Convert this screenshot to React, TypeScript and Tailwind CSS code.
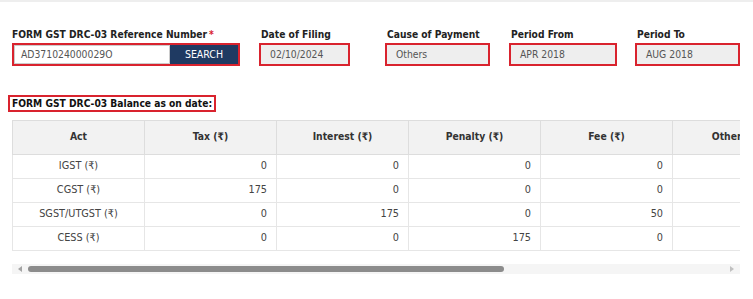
import React from "react";

type Field = {
  label: string;
  value: string;
  width: string;
  gap: string;
};

const fields: Field[] = [
  { label: "Date of Filing", value: "02/10/2024", width: "w-[91px]", gap: "ml-[19px]" },
  { label: "Cause of Payment", value: "Others", width: "w-[105px]", gap: "ml-[35px]" },
  { label: "Period From", value: "APR 2018", width: "w-[108px]", gap: "ml-[19px]" },
  { label: "Period To", value: "AUG 2018", width: "w-[105px]", gap: "ml-[18px]" },
];

const columns = ["Act", "Tax (₹)", "Interest (₹)", "Penalty (₹)", "Fee (₹)", "Others (₹)", "Total (₹)", "Total (₹)"];

const rows: [string, number[]][] = [
  ["IGST (₹)", [0, 0, 0, 0, 0, 0]],
  ["CGST (₹)", [175, 0, 0, 0, 0, 175]],
  ["SGST/UTGST (₹)", [0, 175, 0, 50, 0, 225]],
  ["CESS (₹)", [0, 0, 175, 0, 0, 175]],
];

export default function App() {
  return (
    <div
      className="h-[299px] w-[753px] overflow-hidden bg-white text-[11px] text-[#333]"
      style={{ fontFamily: '"DejaVu Sans Condensed", "DejaVu Sans", sans-serif' }}
    >
      <div className="h-[2px] bg-[#eeeeee]" />

      {/* filter row */}
      <div className="flex px-[12px] pt-[24px]">
        <div className="w-[228px]">
          <div className="h-[17px] whitespace-nowrap text-[10.2px] font-bold leading-[17px] text-[#222]">
            FORM GST DRC-03 Reference Number<span className="ml-[2px] text-[#d9232e]">*</span>
          </div>
          <div className="flex h-[23px] border-2 border-[#d9232e] bg-white">
            <div className="flex flex-1 items-center border border-[#ccc] pl-[6px] text-[10.3px] text-[#555]">
              AD371024000029O
            </div>
            <button type="button" className="w-[68px] bg-[#1f3a62] text-[10.5px] text-white">
              SEARCH
            </button>
          </div>
        </div>
        {fields.map((f) => (
          <div key={f.label} className={`${f.width} ${f.gap}`}>
            <div className="h-[17px] whitespace-nowrap pl-[2px] text-[10.2px] font-bold leading-[17px] text-[#222]">
              {f.label}
            </div>
            <div className="flex h-[23px] items-center border-2 border-[#d9232e] bg-[#eeeeee] pl-[9px] text-[10.3px] text-[#555]">
              {f.value}
            </div>
          </div>
        ))}
      </div>

      {/* section heading */}
      <div className="mt-[29px] pl-[8px]">
        <span className="inline-block h-[17px] whitespace-nowrap border-2 border-[#d9232e] px-[2px] text-[10.2px] font-bold leading-[13px] text-[#111]">
          FORM GST DRC-03 Balance as on date:
        </span>
      </div>

      {/* table */}
      <div className="mt-[7px] ml-[12px] w-[728px] overflow-hidden">
        <table className="w-[1056px] table-fixed border-collapse">
          <tbody>
            <tr className="h-[34px] bg-[#f2f2f2]">
              {columns.map((c, i) => (
                <th
                  key={i}
                  className="w-[132px] border border-[#dddddd] text-center text-[10.3px] font-bold text-[#333]"
                >
                  {c}
                </th>
              ))}
            </tr>
            {rows.map(([act, vals]) => (
              <tr key={act} className="h-[24px] text-[10.8px]">
                <td className="border border-[#e6e6e6] text-center text-[#444]">{act}</td>
                {vals.map((v, i) => (
                  <td key={i} className="border border-[#e6e6e6] pr-[9px] text-right text-[#444]">
                    {v}
                  </td>
                ))}
                <td className="border border-[#e6e6e6]" />
              </tr>
            ))}
          </tbody>
        </table>
      </div>

      {/* horizontal scrollbar */}
      <div className="mt-[13px] ml-[12px] flex h-[10px] w-[728px] items-center bg-[#f5f5f5]">
        <span className="ml-[6px] h-0 w-0 border-y-[3px] border-r-[4px] border-y-transparent border-r-[#a3a3a3]" />
        <div className="ml-[6px] h-[6px] w-[476px] rounded-full bg-[#8c8c8c]" />
        <span className="ml-auto mr-[6px] h-0 w-0 border-y-[3px] border-l-[4px] border-y-transparent border-l-[#c0c0c0]" />
      </div>
    </div>
  );
}
